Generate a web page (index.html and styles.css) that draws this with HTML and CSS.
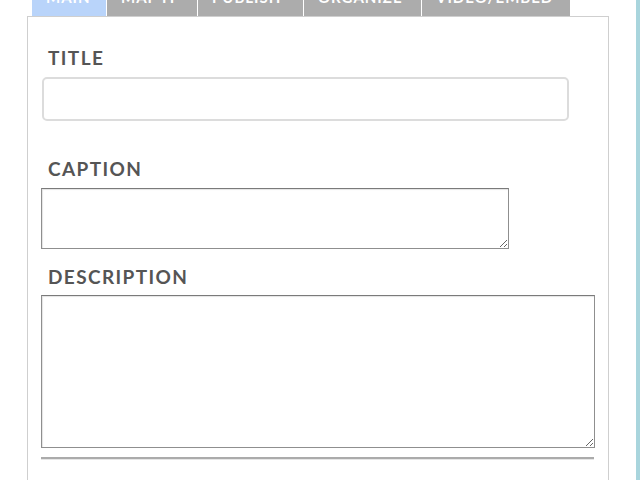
FILE: index.html
```html
<!DOCTYPE html>
<html>
<head>
    <title>Edit Item</title>
    <link rel="stylesheet" href="styles.css">
</head>
<body>
    <div class="page">
        <!-- Tabs along the top of the editor -->
        <div class="tabs">
            <div class="tab active"><span>MAIN</span></div>
            <div class="tab"><span>MAP IT</span></div>
            <div class="tab"><span>PUBLISH</span></div>
            <div class="tab"><span>ORGANIZE</span></div>
            <div class="tab"><span>VIDEO/EMBED</span></div>
        </div>

        <div class="panel">
            <div class="field">
                <label class="label">TITLE</label>
                <input class="title-input" type="text">
            </div>

            <div class="field">
                <label class="label">CAPTION</label>
                <textarea class="caption-input"></textarea>
            </div>

            <div class="field">
                <label class="label">DESCRIPTION</label>
                <textarea class="description-input"></textarea>
            </div>

            <hr class="divider">
        </div>
    </div>
    <div class="side-strip"></div>
</body>
</html>
```

FILE: styles.css
```css
html, body {
    height: 100%;
}

body {
    margin: 0;
    background-color: #fff;
    font-family: 'Lato', 'Open Sans', sans-serif;
    display: flex;
    overflow: hidden;
}

.page {
    flex: 1;
    padding-left: 27px;
}

.tabs {
    display: flex;
    gap: 1px;
    height: 16px;
    padding-left: 5px;
}

.tab {
    background-color: #acacac;
    color: #fff;
    font-size: 15px;
    font-weight: bold;
    letter-spacing: 1px;
    line-height: 15px;
    height: 16px;
    padding: 0 14px;
    box-sizing: content-box;
}

/* the tab labels are scrolled mostly out of view */
.tab span {
    display: block;
    margin-top: -10px;
}

.tab:nth-child(1) { width: 46px; }
.tab:nth-child(2) { width: 62px; }
.tab:nth-child(3) { width: 77px; }
.tab:nth-child(4) { width: 89px; }
.tab:nth-child(5) { width: 120px; }

.tab.active {
    background-color: #b9d4fa; /* selected tab */
}

.panel {
    width: 582px;
    height: 480px;
    border: 1px solid #cfcfcf;
    border-bottom: none;
    padding: 27px 0 0 14px;
    box-sizing: border-box;
}

.field {
    display: flex;
    flex-direction: column;
    align-items: flex-start;
}

.label {
    color: #555;
    font-size: 19px;
    font-weight: bold;
    letter-spacing: 1.4px;
    padding: 2px 0 0 6px;
    margin-bottom: 7px;
    line-height: 24px;
}

.title-input {
    width: 527px;
    height: 44px;
    box-sizing: border-box;
    border: 2px solid #dcdcdc;
    border-radius: 5px;
    margin-bottom: 34px;
}

.caption-input,
.description-input {
    box-sizing: border-box;
    border: 1px solid #8f8f8f;
    border-top-color: #7a7a7a;
    box-shadow: inset 1px 1px 1px #e4e4e4;
    margin: 0;
    margin-left: -1px;
}

.caption-input {
    width: 468px;
    height: 61px;
    margin-bottom: 14px;
}

.description-input {
    width: 554px;
    height: 153px;
    margin-top: -1px;
}

.divider {
    width: 553px;
    margin: 9px 0 0 -1px;
    border: none;
    border-top: 2px solid #ababab;
    border-bottom: 1px solid #e6e6e6;
}

.side-strip {
    width: 4px;
    background-color: #a9d5dd;
}
```
